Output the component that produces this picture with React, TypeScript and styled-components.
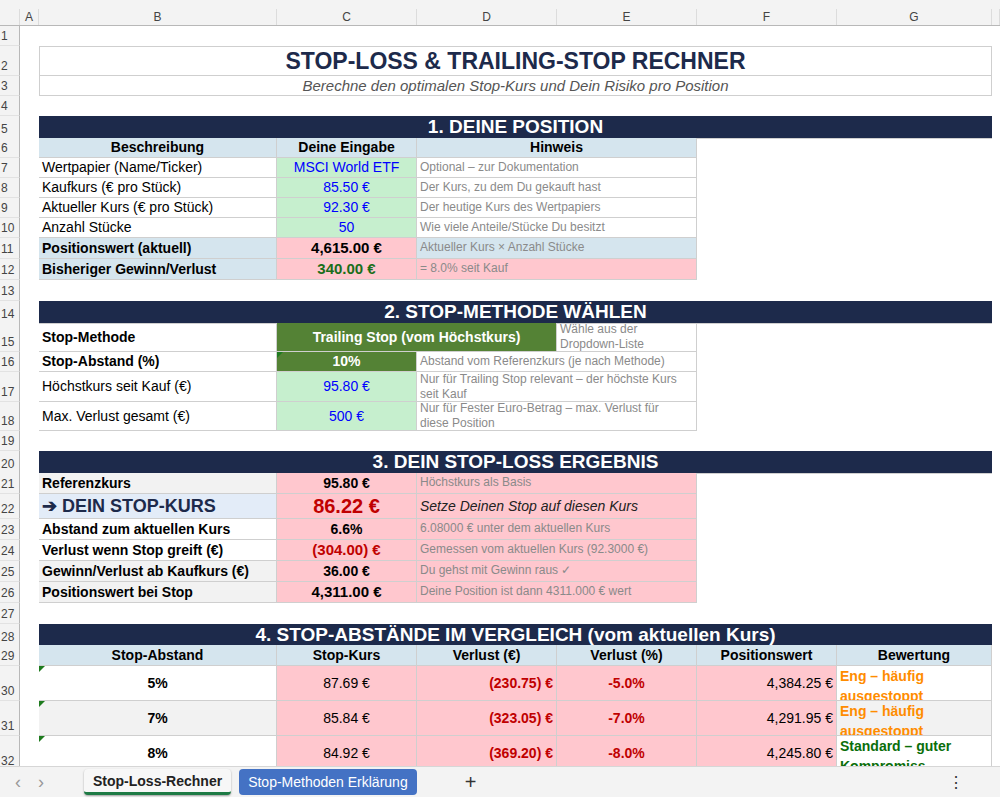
import React from 'react';
import styled, { createGlobalStyle } from 'styled-components';

const GlobalStyle = createGlobalStyle`
  body { margin: 0; font-family: "Liberation Sans", Arial, sans-serif; background: #fff; overflow: hidden; }
`;

const COLS = '20px 19px 238px 140px 140px 140px 140px 155px 8px';

const Sheet = styled.div`
  width: 1000px;
  height: 766px;
  overflow: hidden;
  background: #fff;
`;

const TopStrip = styled.div`
  height: 9px;
  background: #f3f3f3;
`;

const HeadRow = styled.div`
  display: grid;
  grid-template-columns: ${COLS};
  height: 17px;
  background: #f3f3f3;
  border-bottom: 1px solid #b8b8b8;
  box-sizing: border-box;
`;

const ColLetter = styled.div`
  font-size: 12px;
  color: #444;
  display: flex;
  align-items: center;
  justify-content: center;
  border-right: 1px solid #dcdcdc;
`;

const Row = styled.div<{ $h: number }>`
  display: grid;
  grid-template-columns: ${COLS};
  height: ${(p) => p.$h}px;
`;

const RowNum = styled.div`
  grid-column: 1;
  background: #f3f3f3;
  border-right: 1px solid #b8b8b8;
  border-bottom: 1px solid #e2e2e2;
  font-size: 12px;
  color: #444;
  display: flex;
  align-items: flex-end;
  padding: 0 0 2px 1px;
`;

interface CellProps {
  $c: number;
  $s?: number;
  $bg?: string;
  $color?: string;
  $bold?: boolean;
  $size?: number;
  $align?: 'left' | 'center' | 'right';
  $italic?: boolean;
  $tight?: boolean;
}

const Cell = styled.div<CellProps>`
  grid-column: ${(p) => p.$c} / span ${(p) => p.$s ?? 1};
  position: relative;
  background: ${(p) => p.$bg ?? 'transparent'};
  color: ${(p) => p.$color ?? '#000'};
  font-weight: ${(p) => (p.$bold ? 700 : 400)};
  font-style: ${(p) => (p.$italic ? 'italic' : 'normal')};
  font-size: ${(p) => p.$size ?? 14}px;
  line-height: ${(p) => (p.$tight ? '15px' : '1.15')};
  display: flex;
  align-items: center;
  justify-content: ${(p) => (p.$align === 'center' ? 'center' : p.$align === 'right' ? 'flex-end' : 'flex-start')};
  text-align: ${(p) => p.$align ?? 'left'};
  padding: 0 3px;
  box-sizing: border-box;
  border-right: 1px solid #cfcfcf;
  border-bottom: 1px solid #cfcfcf;
  overflow: hidden;
  white-space: ${(p) => (p.$tight ? 'normal' : 'nowrap')};
`;

const Section = styled.div`
  grid-column: 3 / span 6;
  background: #1d2a4b;
  color: #fff;
  font-weight: 700;
  font-size: 19px;
  display: flex;
  align-items: center;
  justify-content: center;
  border-bottom: 1px solid #cfcfcf;
`;

const Flag = styled.span`
  position: absolute;
  left: 0;
  top: 0;
  width: 0;
  height: 0;
  border-top: 6px solid #1e7b1e;
  border-right: 6px solid transparent;
`;

const TabBar = styled.div`
  height: 30px;
  background: #f3f3f3;
  display: flex;
  align-items: center;
  border-top: 1px solid #d6d6d6;
`;

const Nav = styled.span`
  width: 36px;
  text-align: center;
  color: #999;
  font-size: 18px;
`;

const Tab = styled.div<{ $active?: boolean }>`
  height: 26px;
  margin-left: ${(p) => (p.$active ? '38px' : '8px')};
  padding: 0 9px;
  border-radius: 4px;
  display: flex;
  align-items: center;
  font-size: 14px;
  background: ${(p) => (p.$active ? '#f7f7f7' : '#4472c4')};
  color: ${(p) => (p.$active ? '#222' : '#fff')};
  font-weight: ${(p) => (p.$active ? 600 : 400)};
  border-bottom: ${(p) => (p.$active ? '3px solid #1e7b45' : 'none')};
  box-shadow: ${(p) => (p.$active ? '0 1px 2px rgba(0,0,0,0.35)' : 'none')};
  box-sizing: border-box;
`;

const Plus = styled.span`
  margin-left: 48px;
  font-size: 20px;
  color: #333;
`;

const More = styled.span`
  margin-left: auto;
  margin-right: 36px;
  font-size: 16px;
  color: #333;
`;

const BottomStrip = styled.div`
  height: 8px;
  background: #fff;
`;

const NAVY_TXT = '#1d2a4b';
const LBLUE = '#d5e5ee';
const GREEN = '#c6efce';
const DGREEN = '#548235';
const PINK = '#ffc7ce';
const GREY = '#f2f2f2';
const HINT = '#8a8a8a';
const RED = '#c00000';

const hint = { $size: 12, $color: HINT } as const;

export default function App() {
  const letters = ['', 'A', 'B', 'C', 'D', 'E', 'F', 'G', ''];
  const cmp = [
    { p: '5%', k: '87.69 €', v: '(230.75) €', pc: '-5.0%', w: '4,384.25 €', b: 'Eng – häufig ausgestoppt', bc: '#ff8c00', bg: '#fff' },
    { p: '7%', k: '85.84 €', v: '(323.05) €', pc: '-7.0%', w: '4,291.95 €', b: 'Eng – häufig ausgestoppt', bc: '#ff8c00', bg: GREY },
    { p: '8%', k: '84.92 €', v: '(369.20) €', pc: '-8.0%', w: '4,245.80 €', b: 'Standard – guter Kompromiss', bc: '#0a6e0a', bg: '#fff' },
  ];
  return (
    <>
      <GlobalStyle />
      <Sheet>
        <TopStrip />
        <HeadRow>
          {letters.map((l, i) => (
            <ColLetter key={i}>{l}</ColLetter>
          ))}
        </HeadRow>

        <Row $h={20}><RowNum>1</RowNum></Row>
        <Row $h={30}>
          <RowNum>2</RowNum>
          <Cell $c={3} $s={6} $align="center" $bold $size={23} $color={NAVY_TXT} style={{ borderLeft: '1px solid #cfcfcf', borderTop: '1px solid #cfcfcf' }}>
            STOP-LOSS &amp; TRAILING-STOP RECHNER
          </Cell>
        </Row>
        <Row $h={20}>
          <RowNum>3</RowNum>
          <Cell $c={3} $s={6} $align="center" $italic $size={15} $color="#555" style={{ borderLeft: '1px solid #cfcfcf' }}>
            Berechne den optimalen Stop-Kurs und Dein Risiko pro Position
          </Cell>
        </Row>
        <Row $h={20}><RowNum>4</RowNum></Row>

        <Row $h={22}><RowNum>5</RowNum><Section>1. DEINE POSITION</Section></Row>
        <Row $h={20}>
          <RowNum>6</RowNum>
          <Cell $c={3} $bg={LBLUE} $bold $align="center">Beschreibung</Cell>
          <Cell $c={4} $bg={LBLUE} $bold $align="center">Deine Eingabe</Cell>
          <Cell $c={5} $s={2} $bg={LBLUE} $bold $align="center">Hinweis</Cell>
        </Row>
        {[
          ['7', 'Wertpapier (Name/Ticker)', 'MSCI World ETF', 'Optional – zur Dokumentation'],
          ['8', 'Kaufkurs (€ pro Stück)', '85.50 €', 'Der Kurs, zu dem Du gekauft hast'],
          ['9', 'Aktueller Kurs (€ pro Stück)', '92.30 €', 'Der heutige Kurs des Wertpapiers'],
          ['10', 'Anzahl Stücke', '50', 'Wie viele Anteile/Stücke Du besitzt'],
        ].map(([n, a, b, c]) => (
          <Row $h={20} key={n}>
            <RowNum>{n}</RowNum>
            <Cell $c={3}>{a}</Cell>
            <Cell $c={4} $bg={GREEN} $color="#0000ff" $align="center">{b}</Cell>
            <Cell $c={5} $s={2} {...hint}>{c}</Cell>
          </Row>
        ))}
        <Row $h={21}>
          <RowNum>11</RowNum>
          <Cell $c={3} $bg={LBLUE} $bold>Positionswert (aktuell)</Cell>
          <Cell $c={4} $bg={PINK} $bold $size={15} $align="center">4,615.00 €</Cell>
          <Cell $c={5} $s={2} $bg={LBLUE} {...hint}>Aktueller Kurs × Anzahl Stücke</Cell>
        </Row>
        <Row $h={21}>
          <RowNum>12</RowNum>
          <Cell $c={3} $bg={LBLUE} $bold>Bisheriger Gewinn/Verlust</Cell>
          <Cell $c={4} $bg={PINK} $bold $size={15} $color="#1a6e1a" $align="center">340.00 €</Cell>
          <Cell $c={5} $s={2} $bg={PINK} {...hint}>= 8.0% seit Kauf</Cell>
        </Row>
        <Row $h={21}><RowNum>13</RowNum></Row>

        <Row $h={22}><RowNum>14</RowNum><Section>2. STOP-METHODE WÄHLEN</Section></Row>
        <Row $h={29}>
          <RowNum>15</RowNum>
          <Cell $c={3} $bold>Stop-Methode</Cell>
          <Cell $c={4} $s={2} $bg={DGREEN} $color="#fff" $bold $align="center">Trailing Stop (vom Höchstkurs)</Cell>
          <Cell $c={6} {...hint} $tight>Wähle aus der Dropdown-Liste</Cell>
        </Row>
        <Row $h={20}>
          <RowNum>16</RowNum>
          <Cell $c={3} $bold>Stop-Abstand (%)</Cell>
          <Cell $c={4} $bg={DGREEN} $color="#fff" $bold $align="center"><Flag />10%</Cell>
          <Cell $c={5} $s={2} {...hint}>Abstand vom Referenzkurs (je nach Methode)</Cell>
        </Row>
        <Row $h={30}>
          <RowNum>17</RowNum>
          <Cell $c={3}>Höchstkurs seit Kauf (€)</Cell>
          <Cell $c={4} $bg={GREEN} $color="#0000ff" $align="center">95.80 €</Cell>
          <Cell $c={5} $s={2} {...hint} $tight>Nur für Trailing Stop relevant – der höchste Kurs seit Kauf</Cell>
        </Row>
        <Row $h={29}>
          <RowNum>18</RowNum>
          <Cell $c={3}>Max. Verlust gesamt (€)</Cell>
          <Cell $c={4} $bg={GREEN} $color="#0000ff" $align="center">500 €</Cell>
          <Cell $c={5} $s={2} {...hint} $tight style={{ paddingRight: 20 }}>Nur für Fester Euro-Betrag – max. Verlust für diese Position</Cell>
        </Row>
        <Row $h={20}><RowNum>19</RowNum></Row>

        <Row $h={22}><RowNum>20</RowNum><Section>3. DEIN STOP-LOSS ERGEBNIS</Section></Row>
        <Row $h={21}>
          <RowNum>21</RowNum>
          <Cell $c={3} $bg={GREY} $bold>Referenzkurs</Cell>
          <Cell $c={4} $bg={PINK} $bold $align="center">95.80 €</Cell>
          <Cell $c={5} $s={2} $bg={PINK} {...hint}>Höchstkurs als Basis</Cell>
        </Row>
        <Row $h={25}>
          <RowNum>22</RowNum>
          <Cell $c={3} $bg="#e3ecf8" $bold $size={18} $color={NAVY_TXT}>➔ DEIN STOP-KURS</Cell>
          <Cell $c={4} $bg={PINK} $bold $size={20} $color={RED} $align="center">86.22 €</Cell>
          <Cell $c={5} $s={2} $bg={PINK} $italic $size={14} $color="#222">Setze Deinen Stop auf diesen Kurs</Cell>
        </Row>
        {[
          ['23', 'Abstand zum aktuellen Kurs', '6.6%', '6.08000 € unter dem aktuellen Kurs', '#000', 14, '#fff'],
          ['24', 'Verlust wenn Stop greift (€)', '(304.00) €', 'Gemessen vom aktuellen Kurs (92.3000 €)', RED, 15, '#fff'],
          ['25', 'Gewinn/Verlust ab Kaufkurs (€)', '36.00 €', 'Du gehst mit Gewinn raus ✓', '#000', 14, GREY],
          ['26', 'Positionswert bei Stop', '4,311.00 €', 'Deine Position ist dann 4311.000 € wert', '#000', 15, GREY],
        ].map(([n, a, b, c, col, sz, bg]) => (
          <Row $h={21} key={n as string}>
            <RowNum>{n}</RowNum>
            <Cell $c={3} $bg={bg as string} $bold>{a}</Cell>
            <Cell $c={4} $bg={PINK} $bold $size={sz as number} $color={col as string} $align="center">{b}</Cell>
            <Cell $c={5} $s={2} $bg={PINK} {...hint}>{c}</Cell>
          </Row>
        ))}
        <Row $h={21}><RowNum>27</RowNum></Row>

        <Row $h={21}><RowNum>28</RowNum><Section>4. STOP-ABSTÄNDE IM VERGLEICH (vom aktuellen Kurs)</Section></Row>
        <Row $h={21}>
          <RowNum>29</RowNum>
          {['Stop-Abstand', 'Stop-Kurs', 'Verlust (€)', 'Verlust (%)', 'Positionswert', 'Bewertung'].map((h, i) => (
            <Cell key={h} $c={3 + i} $bg={LBLUE} $bold $align="center">{h}</Cell>
          ))}
        </Row>
        {cmp.map((r, i) => (
          <Row $h={35} key={r.p}>
            <RowNum>{30 + i}</RowNum>
            <Cell $c={3} $bg={r.bg} $bold $align="center"><Flag />{r.p}</Cell>
            <Cell $c={4} $bg={PINK} $align="center">{r.k}</Cell>
            <Cell $c={5} $bg={PINK} $bold $color={RED} $align="right">{r.v}</Cell>
            <Cell $c={6} $bg={PINK} $bold $color={RED} $align="center">{r.pc}</Cell>
            <Cell $c={7} $bg={PINK} $align="right">{r.w}</Cell>
            <Cell $c={8} $bg={r.bg} $bold $color={r.bc} $tight style={{ lineHeight: '20px', alignItems: 'flex-start' }}>{r.b}</Cell>
          </Row>
        ))}
      </Sheet>
      <TabBar>
        <Nav>‹</Nav>
        <Nav style={{ width: 10 }}>›</Nav>
        <Tab $active>Stop-Loss-Rechner</Tab>
        <Tab>Stop-Methoden Erklärung</Tab>
        <Plus>+</Plus>
        <More>⋮</More>
      </TabBar>
      <BottomStrip />
    </>
  );
}
